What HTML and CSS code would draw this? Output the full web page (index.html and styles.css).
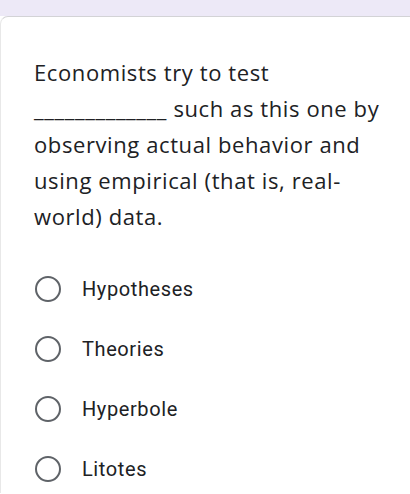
FILE: index.html
```html
<!DOCTYPE html>
<html>
<head>
<meta charset="utf-8">
<link rel="stylesheet" href="styles.css">
</head>
<body>
<div class="band"></div>
<div class="card">
  <p class="question">Economists try to test<br>_____________ such as this one by observing actual behavior and using empirical (that is, real-world) data.</p>
  <div class="options">
    <div class="option"><span class="radio"></span><span class="label">Hypotheses</span></div>
    <div class="option"><span class="radio"></span><span class="label">Theories</span></div>
    <div class="option"><span class="radio"></span><span class="label">Hyperbole</span></div>
    <div class="option"><span class="radio"></span><span class="label">Litotes</span></div>
  </div>
</div>
</body>
</html>
```
FILE: styles.css
```css
html, body {
  margin: 0;
  padding: 0;
  background: #ffffff;
}
body {
  width: 410px;
  height: 494px;
  overflow: hidden;
}
.band {
  height: 16px;
  background: #ede9f7;
}
.card {
  border-top: 1px solid #d3d3d6;
  border-left: 1px solid #e8e8e8;
  border-top-left-radius: 8px;
  background: #fff;
  padding: 37px 0 0 33px;
  height: 477px;
  box-sizing: border-box;
}
.question {
  margin: 0;
  width: 368px;
  font-family: "Open Sans", sans-serif;
  font-size: 22px;
  line-height: 36px;
  letter-spacing: 0.6px;
  color: #202124;
}
.options {
  display: flex;
  flex-direction: column;
  gap: 34px;
  margin-top: 42px;
}
.option {
  display: flex;
  align-items: center;
  height: 26px;
}
.radio {
  width: 22px;
  height: 22px;
  border: 2.5px solid #5f6368;
  border-radius: 50%;
  margin-left: 1px;
  flex: none;
}
.label {
  margin-left: 21px;
  font-family: Roboto, sans-serif;
  font-size: 20px;
  color: #202124;
  letter-spacing: 0.6px;
}
```
